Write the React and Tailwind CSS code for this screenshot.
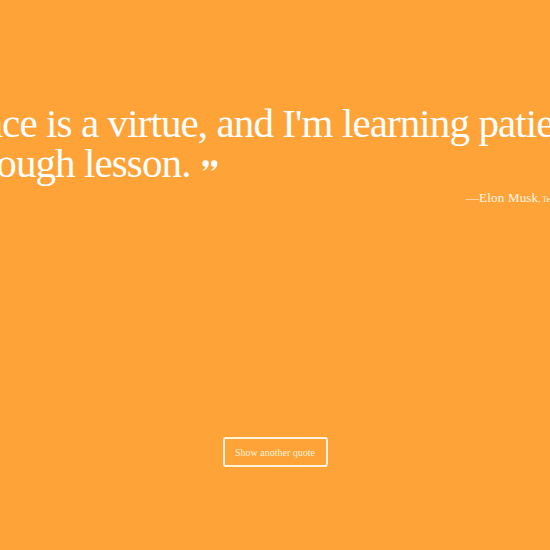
const QuoteMark = () => (
  <svg viewBox="0 0 18 12" className="inline-block w-[16px] h-[11px] ml-[12px] align-[6px]" fill="currentColor">
    <path d="M4 0a3.6 3.6 0 0 1 3.6 3.8c0 4-2.8 7.1-6.4 8.2l-0.5-1c1.9-0.9 3-2.3 3.3-3.7A3.6 3.6 0 0 1 4 0z" />
    <path d="M13.6 0a3.6 3.6 0 0 1 3.6 3.8c0 4-2.8 7.1-6.4 8.2l-0.5-1c1.9-0.9 3-2.3 3.3-3.7A3.6 3.6 0 0 1 13.6 0z" />
  </svg>
);

export default function App() {
  return (
    <div className="w-full h-[550px] overflow-hidden bg-[#fea337] font-['Liberation_Serif',serif] text-white">
      <div className="flex justify-center pt-[103px]">
        <div className="w-[740px] shrink-0">
          <blockquote className="text-[41px] leading-[40px] tracking-[-0.9px] text-left">
            Patience is a virtue, and I'm learning patience.
            <br />
            It's a tough lesson.
            <QuoteMark />
          </blockquote>
          <div className="mt-[5px] flex justify-end items-baseline pr-[45px] text-[#fff7e6]">
            <span className="text-[13px] leading-[20px] tracking-[0.2px]">—Elon Musk</span>
            <span className="text-[8px]">, Tech entrepreneur</span>
          </div>
        </div>
      </div>
      <div className="flex justify-center mt-[229px]">
        <button
          type="button"
          className="w-[105px] h-[30px] border-2 border-[#fff3dc] rounded-[3px] text-[10px] text-[#fff3dc]"
        >
          Show another quote
        </button>
      </div>
    </div>
  );
}
